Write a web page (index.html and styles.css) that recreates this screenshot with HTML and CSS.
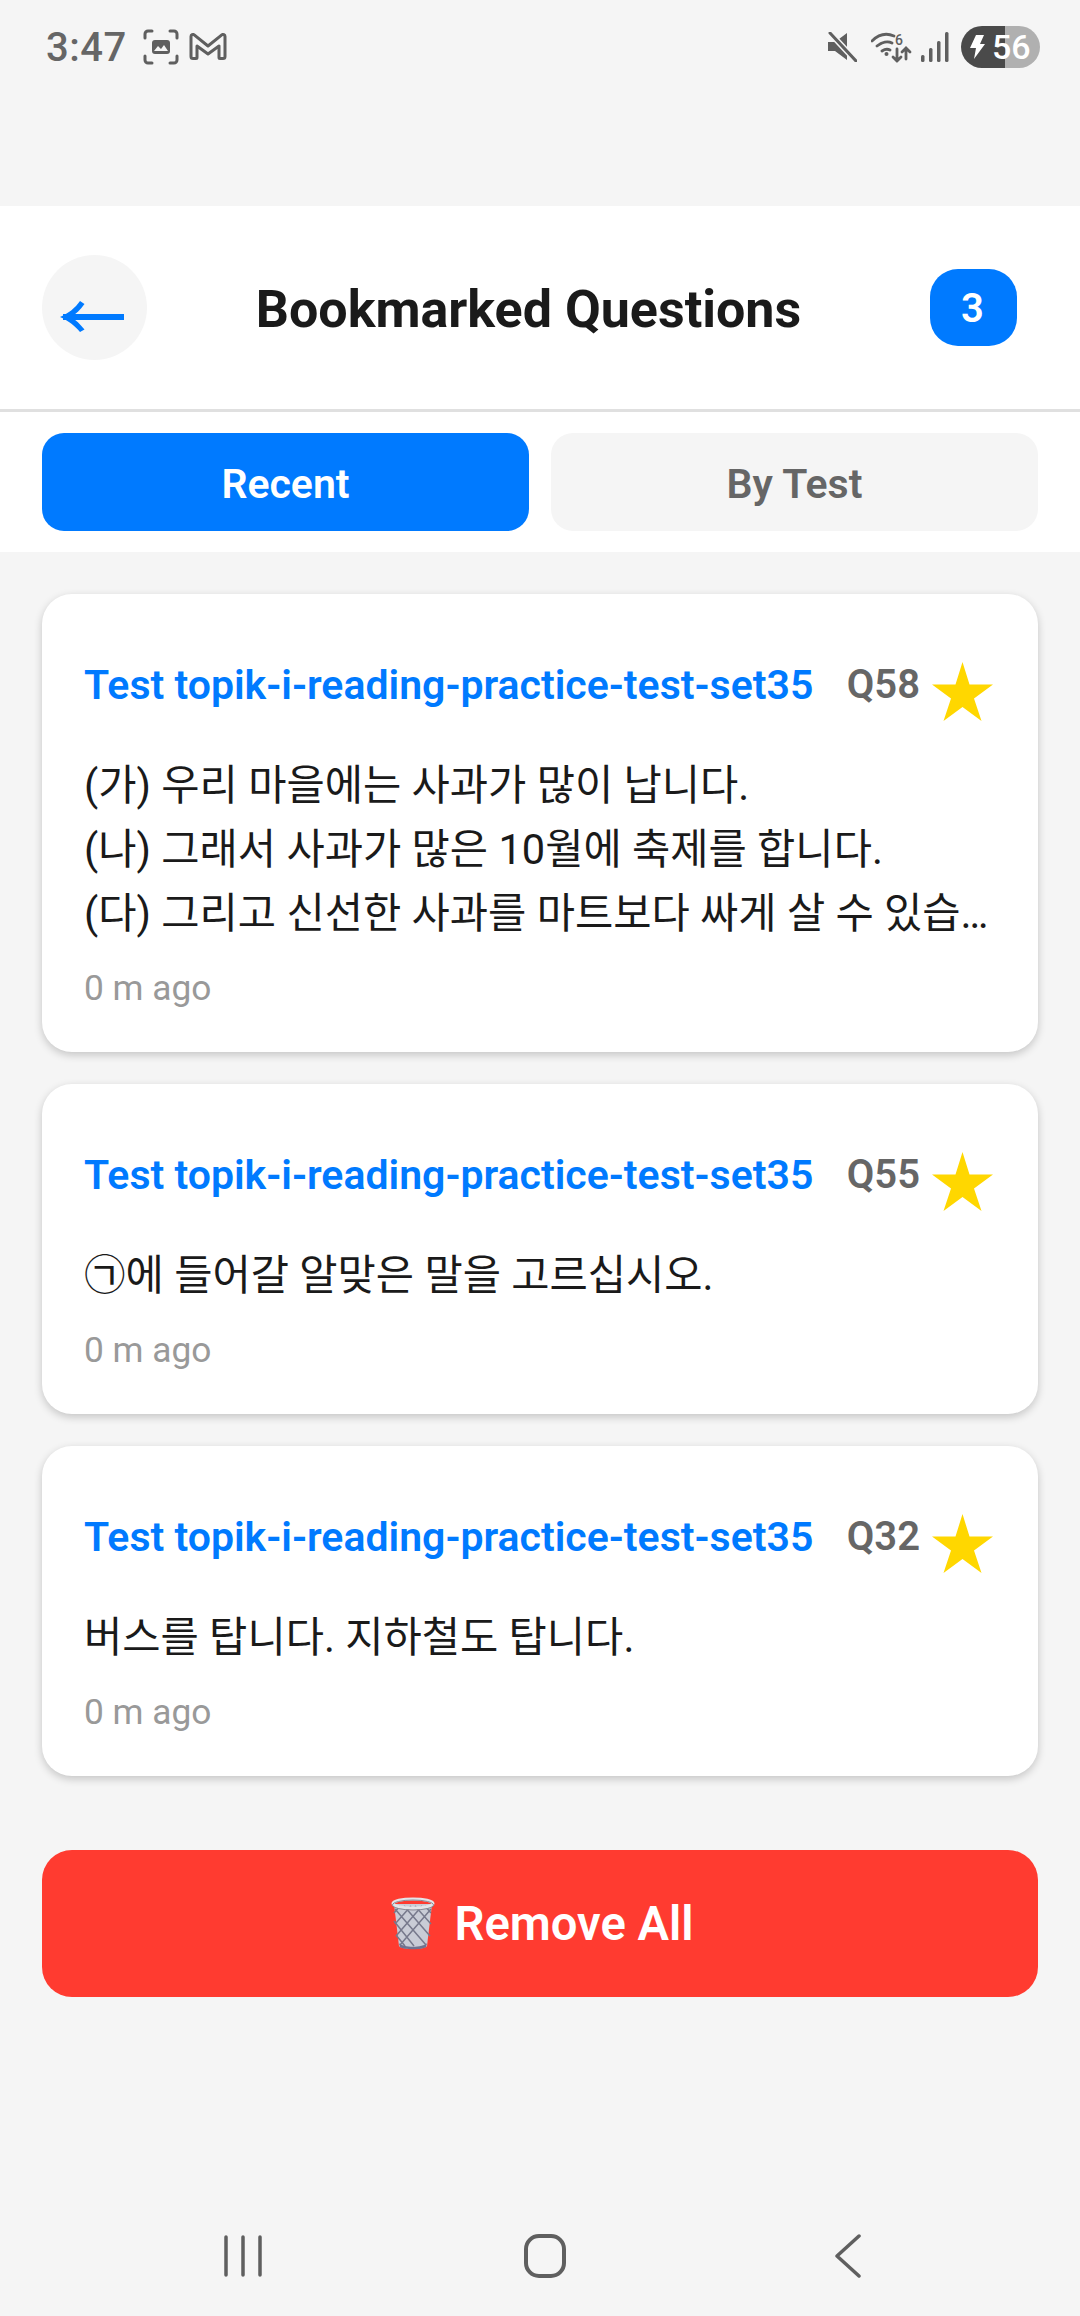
FILE: index.html
```html
<!DOCTYPE html>
<html lang="ko">
<head>
    <meta charset="UTF-8">
    <meta name="viewport" content="width=device-width, initial-scale=1.0">
    <title>Bookmarked Questions</title>
    <link rel="stylesheet" href="styles.css">
</head>
<body>
    <div class="status">
        <div class="status-side">
            <span class="time">3:47</span>
            <svg class="ico-shot" viewBox="0 0 36 36" fill="none" stroke="#5f5f5f" stroke-width="3" stroke-linecap="round">
                <path d="M2 9V5a3 3 0 0 1 3-3h4M27 2h4a3 3 0 0 1 3 3v4M34 27v4a3 3 0 0 1-3 3h-4M9 34H5a3 3 0 0 1-3-3v-4"/>
                <rect x="9" y="11" width="18" height="14" rx="3" fill="#5f5f5f" stroke="none"/>
                <path d="M11 22l4-5 3 3 3-4 4 6z" fill="#f5f5f5" stroke="none"/>
            </svg>
            <svg class="ico-mail" viewBox="0 0 38 28" fill="none" stroke="#5f5f5f" stroke-width="3" stroke-linejoin="round">
                <path d="M2 3.5v20a2 2 0 0 0 2 2h3a1 1 0 0 0 1-1V13l11 8 11-8v11.5a1 1 0 0 0 1 1h3a2 2 0 0 0 2-2v-20a2 2 0 0 0-3.200-1.600L19 13 5.200 1.900A2 2 0 0 0 2 3.500z"/>
            </svg>
        </div>
        <div class="status-side">
            <svg class="ico-mute" viewBox="0 0 30 30">
                <path d="M1 10h7L20 1v27L8 19H1z" fill="#5f5f5f"/>
                <path d="M2 0l28 30" stroke="#f5f5f5" stroke-width="6"/>
                <path d="M3 1l26 28" stroke="#5f5f5f" stroke-width="3" stroke-linecap="round"/>
            </svg>
            <svg class="ico-wifi" viewBox="0 0 41 31" fill="none" stroke="#5f5f5f" stroke-width="2.800" stroke-linecap="round">
                <path d="M1 9c7-7 15-8 22-5M6 14c5-4 11-5 15-3M11 19c3-2 6-2 8-1"/>
                <circle cx="15.500" cy="22" r="2" fill="#5f5f5f" stroke="none"/>
                <path d="M26 17v12M22 25l4 4 4-4M35 27V17M31 20l4-4 4 4"/>
                <text x="24" y="13" class="wifi-num">6</text>
            </svg>
            <svg class="ico-signal" viewBox="0 0 30 30" fill="#5f5f5f">
                <rect x="1" y="23" width="3.500" height="7" rx="1.500"/>
                <rect x="9" y="16" width="3.500" height="14" rx="1.500"/>
                <rect x="17" y="9" width="3.500" height="21" rx="1.500"/>
                <rect x="25" y="0" width="3.500" height="30" rx="1.500"/>
            </svg>
            <div class="battery">
                <svg class="ico-bolt" viewBox="0 0 15 24"><path d="M6 0h8L10 9h5L4 24l2-11H0z" fill="#fff"/></svg>
                <span>56</span>
            </div>
        </div>
    </div>

    <div class="header">
        <div class="back">
            <svg class="back-arrow" viewBox="0 0 64 34" fill="none">
                <path d="M3 18h61" stroke="#007aff" stroke-width="6"/>
                <path d="M20 2C15 9 9 14 0 18c9 4 15 9 20 15l4.500-2.500C20 25 16 21 11 18c5-3 9-7 13.500-13z" fill="#007aff"/>
            </svg>
        </div>
        <h1 class="title">Bookmarked Questions</h1>
        <div class="count">3</div>
    </div>

    <div class="tabs">
        <div class="tab tab-active">Recent</div>
        <div class="tab">By Test</div>
    </div>

    <div class="list">
        <div class="card">
            <div class="card-head">
                <span class="card-test">Test topik-i-reading-practice-test-set35</span>
                <span class="card-num">Q58</span>
                <svg class="star" viewBox="0 0 61 59"><path d="M30.500 0l7 22.500H61L42 36.500 49.500 59 30.500 45 11.500 59 19 36.500 0 22.500h23.500z"/></svg>
            </div>
            <div class="card-text">(가) 우리 마을에는 사과가 많이 납니다.<br>(나) 그래서 사과가 많은 10월에 축제를 합니다.<br>(다) 그리고 신선한 사과를 마트보다 싸게 살 수 있습…</div>
            <div class="card-time">0 m ago</div>
        </div>
        <div class="card">
            <div class="card-head">
                <span class="card-test">Test topik-i-reading-practice-test-set35</span>
                <span class="card-num">Q55</span>
                <svg class="star" viewBox="0 0 61 59"><path d="M30.500 0l7 22.500H61L42 36.500 49.500 59 30.500 45 11.500 59 19 36.500 0 22.500h23.500z"/></svg>
            </div>
            <div class="card-text">㉠에 들어갈 알맞은 말을 고르십시오.</div>
            <div class="card-time">0 m ago</div>
        </div>
        <div class="card">
            <div class="card-head">
                <span class="card-test">Test topik-i-reading-practice-test-set35</span>
                <span class="card-num">Q32</span>
                <svg class="star" viewBox="0 0 61 59"><path d="M30.500 0l7 22.500H61L42 36.500 49.500 59 30.500 45 11.500 59 19 36.500 0 22.500h23.500z"/></svg>
            </div>
            <div class="card-text">버스를 탑니다. 지하철도 탑니다.</div>
            <div class="card-time">0 m ago</div>
        </div>
    </div>

    <div class="remove">
        <svg class="ico-bin" viewBox="0 0 44 54">
            <path d="M3 7l5 42c2 4 26 4 28 0l5-42z" fill="#c9ccd6"/>
            <path d="M4 12l31 36M13 9l26 30M24 9l16 18M34 9l6 7M3 24l20 25M5 38l9 11M40 12L9 48M31 9L5 39M20 9L4 27M9 9l-6 7" stroke="#77798c" stroke-width="1.500" fill="none"/>
            <path d="M8 46c4 5 24 5 28 0l-1 4c-3 3-23 3-26 0z" fill="#6f7390"/>
            <ellipse cx="22" cy="6.500" rx="20" ry="4.500" fill="none" stroke="#e4e4e8" stroke-width="3"/>
            <ellipse cx="22" cy="8" rx="20.500" ry="5" fill="none" stroke="#8a8a96" stroke-width="1"/>
        </svg>
        <span>Remove All</span>
    </div>

    <div class="nav">
        <svg class="nav-bars" viewBox="0 0 40 42" fill="none" stroke="#5f5f5f" stroke-width="3.500" stroke-linecap="round">
            <path d="M3 2v38M20 2v38M37 2v38"/>
        </svg>
        <svg class="nav-home" viewBox="0 0 42 44" fill="none" stroke="#5f5f5f" stroke-width="4">
            <rect x="2" y="2" width="38" height="40" rx="13"/>
        </svg>
        <svg class="nav-back" viewBox="0 0 26 44" fill="none" stroke="#5f5f5f" stroke-width="3.500" stroke-linecap="round" stroke-linejoin="round">
            <path d="M24 2L2 22l22 20"/>
        </svg>
    </div>
</body>
</html>
```

FILE: styles.css
```css
body {
    font-family: Roboto, "Noto Sans CJK KR", sans-serif;
    background-color: #f5f5f5;
    margin: 0;
    padding: 0;
    height: 2316px;
    display: flex;
    flex-direction: column;
    overflow: hidden;
}

/* status bar */
.status {
    height: 206px;
    box-sizing: border-box;
    padding: 26px 40px 0 46px;
    display: flex;
    justify-content: space-between;
    align-items: flex-start;
}

.status-side {
    display: flex;
    align-items: center;
    height: 42px;
}

.time {
    font-size: 40px;
    font-weight: 500;
    letter-spacing: 0.5px;
    color: #666;
    margin-right: 16px;
}

.ico-shot {
    width: 36px;
    height: 36px;
    margin-right: 10px;
}

.ico-mail {
    width: 38px;
    height: 28px;
}

.ico-mute {
    width: 30px;
    height: 30px;
    margin-right: 14px;
}

.ico-wifi {
    width: 41px;
    height: 31px;
    margin-right: 8px;
}

.wifi-num {
    font-size: 14px;
    font-weight: 500;
    fill: #5f5f5f;
    stroke: none;
}

.ico-signal {
    width: 30px;
    height: 30px;
    margin-right: 11px;
}

.battery {
    width: 79px;
    height: 42px;
    border-radius: 21px;
    background: linear-gradient(90deg, #4a4a4a 44px, #b0b0b0 44px);
    display: flex;
    align-items: center;
    box-sizing: border-box;
    padding-left: 9px;
    color: #fff;
    font-size: 34px;
    font-weight: 500;
}

.ico-bolt {
    width: 15px;
    height: 24px;
    margin-right: 7px;
}

/* header */
.header {
    height: 206px;
    box-sizing: border-box;
    padding: 0 63px 0 42px;
    background-color: #fff;
    border-bottom: 3px solid #e0e0e0;
    display: flex;
    align-items: center;
    justify-content: space-between;
}

.back {
    width: 105px;
    height: 105px;
    border-radius: 50%;
    background-color: #f5f5f5;
    display: flex;
    align-items: center;
    justify-content: center;
}

.back-arrow {
    width: 64px;
    height: 34px;
    margin: 16px 6px 0 0;
}

.title {
    margin: 3px 20px 0 0;
    font-size: 52px;
    font-weight: 700;
    color: #1a1a1a;
}

.count {
    width: 87px;
    height: 77px;
    box-sizing: border-box;
    padding: 2px 2px 0 0;
    border-radius: 28px;
    background-color: #007aff;
    color: #fff;
    font-size: 40px;
    font-weight: 600;
    display: flex;
    align-items: center;
    justify-content: center;
}

/* tabs */
.tabs {
    background-color: #fff;
    padding: 21px 42px;
    display: flex;
    gap: 22px;
}

.tab {
    flex: 1;
    height: 98px;
    box-sizing: border-box;
    padding-top: 3px;
    border-radius: 22px;
    background-color: #f5f5f5;
    color: #666;
    font-size: 41px;
    font-weight: 600;
    display: flex;
    align-items: center;
    justify-content: center;
}

.tab-active {
    background-color: #007aff;
    color: #fff;
}

/* cards */
.list {
    padding: 42px 42px 0;
    display: flex;
    flex-direction: column;
    gap: 32px;
}

.card {
    background-color: #fff;
    border-radius: 30px;
    padding: 42px 45px 41px 42px;
    box-shadow: 0 3px 9px rgba(0, 0, 0, 0.2);
}

.card-head {
    display: flex;
    align-items: flex-start;
    height: 86px;
    margin-bottom: 32px;
}

.card-test {
    flex: 1;
    margin-top: 25px;
    font-size: 41px;
    line-height: 48px;
    font-weight: 600;
    color: #007aff;
    white-space: nowrap;
}

.card-num {
    margin-top: 27px;
    margin-right: 12px;
    font-size: 40px;
    line-height: 44px;
    font-weight: 600;
    color: #666;
}

.star {
    width: 61px;
    height: 59px;
    margin-top: 26px;
    fill: #ffd700;
}

.card-text {
    font-size: 41.6px;
    line-height: 64px;
    color: #1a1a1a;
    white-space: nowrap;
}

.card-time {
    margin-top: 19px;
    font-size: 35.3px;
    line-height: 46px;
    color: #999;
}

/* remove button */
.remove {
    margin: 74px 42px 0;
    height: 147px;
    box-sizing: border-box;
    padding-left: 5px;
    border-radius: 30px;
    background-color: #ff3b30;
    color: #fff;
    font-size: 47.2px;
    font-weight: 600;
    display: flex;
    align-items: center;
    justify-content: center;
    gap: 19px;
}

.ico-bin {
    width: 44px;
    height: 54px;
}

/* bottom nav */
.nav {
    margin-top: auto;
    height: 82px;
    padding-bottom: 19px;
    display: flex;
    align-items: center;
}

.nav-bars {
    width: 40px;
    height: 42px;
    margin-left: 223px;
}

.nav-home {
    width: 42px;
    height: 44px;
    margin-left: 261px;
}

.nav-back {
    width: 26px;
    height: 44px;
    margin-left: 269px;
}
```
